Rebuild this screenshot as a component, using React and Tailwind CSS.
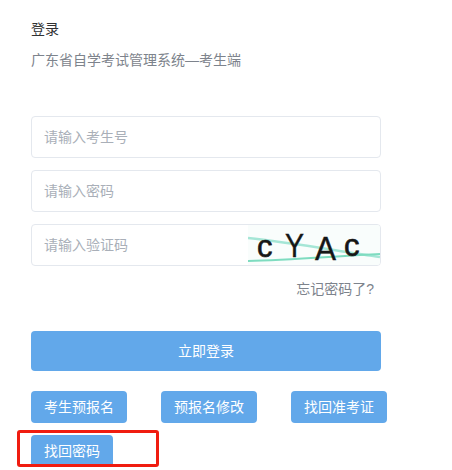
import React from 'react';

const FONT = "font-['Liberation_Sans','Noto_Sans_CJK_SC',sans-serif]";

const Field = ({ placeholder, children }) => {
  return (
    <div className="flex h-[42px] w-[350px] items-center overflow-hidden rounded-[4px] border border-[#e4e8ee] bg-white">
      <div className="flex-1 pl-3 text-sm text-[#a9afb8]">{placeholder}</div>
      {children}
    </div>
  );
};

const Captcha = () => {
  return (
    <svg width="132" height="40" viewBox="0 0 132 40" className="block">
      <rect width="132" height="40" fill="#f9fdfc" />
      <path d="M0 13 C40 17 90 26 132 32" stroke="#a5e6d6" strokeWidth="2.5" fill="none" />
      <path d="M0 36 C40 35 90 31 132 29" stroke="#7edcc0" strokeWidth="2" fill="none" />
      <text x="9" y="32" fontFamily="Liberation Sans" fontSize="31" fill="#161616" stroke="#161616" strokeWidth="0.6">c</text>
      <text x="37" y="32" fontFamily="Liberation Sans" fontSize="33" fill="#161616" stroke="#161616" strokeWidth="0.4" textLength="19" lengthAdjust="spacingAndGlyphs">Y</text>
      <text x="67" y="35" fontFamily="Liberation Sans" fontSize="34" fill="#161616" stroke="#161616" strokeWidth="0.4" textLength="21" lengthAdjust="spacingAndGlyphs">A</text>
      <text x="96" y="31" fontFamily="Liberation Sans" fontSize="31" fill="#161616" stroke="#161616" strokeWidth="0.6">c</text>
    </svg>
  );
};

const SmallButton = ({ text, className }) => {
  return (
    <div className={`flex items-center justify-center rounded-[4px] bg-[#62a8ea] text-sm text-white ${className}`}>
      {text}
    </div>
  );
};

const App = () => {
  return (
    <div className={`relative h-[470px] w-[452px] overflow-hidden bg-white pl-[31px] pt-[20px] ${FONT}`}>
      <div className="text-sm leading-[18px] text-[#303133]">登录</div>
      <div className="mt-[13px] text-sm leading-[18px] text-[#7d838c]">广东省自学考试管理系统—考生端</div>

      <div className="mt-[47px] flex flex-col gap-3">
        <Field placeholder="请输入考生号" />
        <Field placeholder="请输入密码" />
        <Field placeholder="请输入验证码">
          <Captcha />
        </Field>
      </div>

      <div className="mt-[13px] w-[343px] text-right text-sm leading-[20px] text-[#7d838c]">忘记密码了?</div>

      <div className="mt-[32px] flex h-10 w-[350px] items-center justify-center rounded-[4px] bg-[#62a8ea] text-sm text-white">
        立即登录
      </div>

      <div className="mt-5 flex gap-[34px]">
        <SmallButton text="考生预报名" className="h-8 w-24" />
        <SmallButton text="预报名修改" className="h-8 w-24" />
        <SmallButton text="找回准考证" className="h-8 w-24" />
      </div>

      <SmallButton text="找回密码" className="mt-3 h-[31px] w-[82px] rounded-b-none" />

      {/* annotation box drawn over the page */}
      <div className="absolute left-[17px] top-[430px] h-[37px] w-[142px] rounded-[3px] border-[3px] border-[#f01c10]" />
    </div>
  );
};

export default App;
